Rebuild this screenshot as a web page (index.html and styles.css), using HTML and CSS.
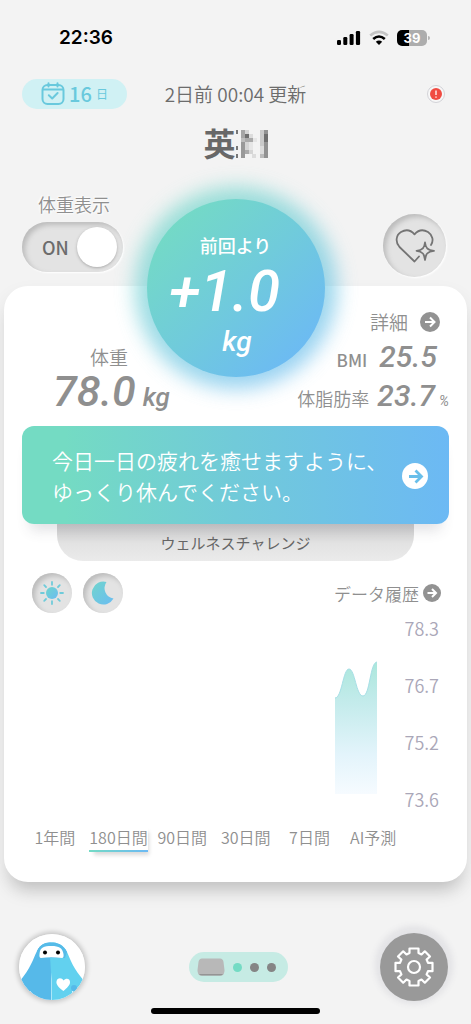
FILE: index.html
```html
<!DOCTYPE html>
<html lang="ja">
<head>
<meta charset="utf-8">
<meta name="viewport" content="width=device-width, initial-scale=1">
<title>体重</title>
<link rel="stylesheet" href="styles.css">
</head>
<body>
<div class="status">
  <time class="clock">22:36</time>
  <div class="status-icons">
    <svg width="24" height="16" viewBox="0 0 24 16"><rect x="0" y="10" width="4" height="5" rx="1.2"/><rect x="6.3" y="7" width="4" height="8" rx="1.2"/><rect x="12.6" y="4" width="4" height="11" rx="1.2"/><rect x="18.9" y="1" width="4.2" height="14" rx="1.2"/></svg>
    <svg width="20" height="16" viewBox="0 0 20 16" fill="none" stroke-width="2.6"><path d="M1.2 5.6Q10-1.8 18.8 5.6" stroke="#c4c4c4"/><path d="M4.2 9Q10 4 15.8 9" stroke="#000"/><path d="M6.8 11.8Q10 9.400 13.200 11.800L10 15Z" fill="#000"/></svg>
    <span class="battery">39</span>
  </div>
</div>

<header class="top">
  <button class="days" type="button">
    <svg width="24" height="24" viewBox="0 0 24 24" fill="none" stroke="#69c9dd" stroke-width="2" stroke-linecap="round" stroke-linejoin="round"><rect x="1.500" y="3" width="21" height="19" rx="5"/><path d="M2 7.500H22M7.500 1.200V4.500M16.500 1.200V4.500M7.800 13.300L11.200 16.500L16.600 11"/></svg>
    <b>16</b><small>日</small>
  </button>
  <p class="updated">2日前 00:04 更新</p>
  <button class="alert" type="button" aria-label="お知らせ"><svg width="12" height="12" viewBox="0 0 12 12"><circle cx="6" cy="6" r="6" fill="#f04b42"/><path d="M6 2.500V7M6 8.500V9.700" stroke="#fff" stroke-width="1.300"/></svg></button>
</header>
<h1 class="name">英<svg width="32" height="32" viewBox="0 0 32 32" shape-rendering="crispEdges" aria-hidden="true">
  <path fill="#777" d="M0 4h2v4H0zM0 20h2v4H0zM0 28h2v4H0z"/>
  <path fill="#a5a5a5" d="M5 4h4v8H5z"/><path fill="#bdbdbd" d="M5 12h4v4H5z"/><path fill="#999" d="M5 16h4v16H5z"/>
  <path fill="#d5d5d5" d="M9 4h4v4H9zM9 16h4v8H9zM13 24h4v4h-4z"/><path fill="#e6e6e6" d="M17 12h4v4h-4zM13 16h4v8h-4z"/><path fill="#6f6f6f" d="M9 8h4v4H9zM28 8h4v8h-4z"/><path fill="#aaa" d="M9 12h8v4H9zM9 24h4v4H9z"/>
  <path fill="#cacaca" d="M24 4h4v16h-4z"/><path fill="#dcdcdc" d="M24 20h4v8h-4zM16 28h4v4h-4zM13 8h4v4h-4z"/><path fill="#bbb" d="M24 28h4v4h-4z"/><path fill="#929292" d="M28 4h4v4h-4zM28 16h4v16h-4z"/>
</svg></h1>

<section class="controls">
  <label class="toggle"><span class="toggle-title">体重表示</span>
    <span class="track"><span>ON</span><input type="checkbox" role="switch" checked></span>
  </label>
  <button class="health" type="button" aria-label="健康">
    <svg width="40" height="34" viewBox="0 0 40 34" fill="none" stroke="#747474" stroke-width="1.800" stroke-linecap="round" stroke-linejoin="round"><path d="M24 27.500L19.500 32.500L4.500 18C0 13 1 6 6 3C11 0 16 1.300 19.500 5.300C23 1.300 28 0 33 3C37.500 6 39 11.500 36 16"/><path d="M30 13.500C30.600 18.500 32.300 21.200 39 21.800C32.300 22.500 30.600 25.200 30 31C29.400 25.200 27.700 22.500 21.500 21.800C27.700 21.200 29.400 18.500 30 13.500Z"/></svg>
  </button>
</section>

<main class="card">
  <div class="bubble"><span class="since">前回より</span><strong>+1.0</strong><em>kg</em></div>

  <section class="stats">
    <div class="weight"><span class="label">体重</span><p><em>78.0</em> <i>kg</i></p></div>
    <div class="details">
      <a class="more" href="#detail">詳細<svg width="20" height="20" viewBox="0 0 20 20"><circle cx="10" cy="10" r="10" fill="#929292"/><path d="M5 10H14M10 5.500L14.500 10L10 14.500" fill="none" stroke="#fff" stroke-width="2"/></svg></a>
      <p class="bmi"><span>BMI</span><em>25.5</em></p>
      <p class="fat"><span>体脂肪率</span><em>23.7</em><i>%</i></p>
    </div>
  </section>

  <a class="banner" href="#message">
    <span>今日一日の疲れを癒せますように、<br>ゆっくり休んでください。</span>
    <svg width="26" height="26" viewBox="0 0 26 26"><circle cx="13" cy="13" r="13" fill="#fff"/><path d="M7 13.500H19M13.500 7.500L19.500 13.500L13.500 19.500" fill="none" stroke="#69bfea" stroke-width="2.800"/></svg>
  </a>
  <a class="challenge" href="#challenge">ウェルネスチャレンジ</a>

  <section class="history">
    <div class="history-head">
      <button class="round" type="button" aria-label="朝"><svg width="24" height="24" viewBox="0 0 24 24"><defs><linearGradient id="tint" x1="0" y1="0" x2="1" y2="1"><stop stop-color="#70d5cc"/><stop offset="1" stop-color="#6bbcf2"/></linearGradient></defs><circle cx="12" cy="12" r="6" fill="url(#tint)"/><path d="M12 1V3.800M12 20.200V23M1 12H3.800M20.200 12H23M4.200 4.200L6 6M18 18L19.800 19.800M4.200 19.800L6 18M18 6L19.800 4.200" stroke="#6fcbda" stroke-width="1.800" stroke-linecap="round"/></svg></button>
      <button class="round" type="button" aria-label="夜"><svg width="24" height="24" viewBox="0 0 24 24"><path d="M15.500 1A11.500 11.500 0 1 0 22.500 17.500A10.500 10.500 0 0 1 15.500 1Z" fill="url(#tint)"/></svg></button>
      <a class="data-link" href="#history">データ履歴<svg width="18" height="18" viewBox="0 0 20 20"><circle cx="10" cy="10" r="10" fill="#929292"/><path d="M5 10H14M10 5.500L14.500 10L10 14.500" fill="none" stroke="#fff" stroke-width="2.200"/></svg></a>
    </div>
    <div class="chart">
      <svg width="42" height="133" viewBox="0 0 42 133" role="img" aria-label="体重の推移"><defs><linearGradient id="area" x1="0" y1="0" x2="0" y2="1"><stop stop-color="#abe7dc"/><stop offset=".3" stop-color="#c3ebeb"/><stop offset=".7" stop-color="#e3f4fb"/><stop offset="1" stop-color="#f6fbff"/></linearGradient></defs><path d="M0 37C7 37 8 8 14 8C20 8 21 35 28 35C35 35 35 1 42 1V133H0Z" fill="url(#area)"/><path d="M0 37C7 37 8 8 14 8C20 8 21 35 28 35C35 35 35 1 42 1" fill="none" stroke="#a6dfe6"/></svg>
      <ol class="axis"><li>78.3</li><li>76.7</li><li>75.2</li><li>73.6</li></ol>
    </div>
    <nav class="ranges">
      <button type="button">1年間</button><button type="button" class="active">180日間</button><button type="button">90日間</button><button type="button">30日間</button><button type="button">7日間</button><button type="button">AI予測</button>
    </nav>
  </section>
</main>

<footer class="dock">
  <button class="avatar" type="button" aria-label="アシスタント">
    <svg width="66" height="66" viewBox="0 0 66 66"><defs><clipPath id="face"><circle cx="33" cy="33" r="33"/></clipPath></defs><g clip-path="url(#face)"><rect width="66" height="66" fill="#fff"/><path d="M0 48C12 34 14 25 18 17C22 9 28 8.500 32 8.500V66H0Z" fill="#56b9e9"/><path d="M32 8.500C38 8.500 44 10 48 18C52 27 54 34 66 48V66H32.500Q33 45 31 22Z" fill="#62d1ef"/><path d="M18 17C22 9 28 8.500 32 8.500C38 8.500 44 10 48 18L46 24H20Z" fill="#56bbe8"/><path d="M22 24Q20 24 20.500 20C21 13 25 12 32.500 12C40 12 43.500 14 44.500 20Q45 24 43 24Q32 22.500 22 24Z" fill="#fff"/><circle cx="26" cy="18.500" r="2"/><circle cx="39" cy="18.500" r="2"/><path d="M44.300 57C39 53 37 50 37.500 47.500C38 43.500 43 43.500 44.500 46.500C47 43.500 51.500 44.500 51 48.500C51 51 48 54 44.300 57Z" fill="#fff"/><circle cx="55" cy="54" r="3" fill="#56b9e9"/><path d="M11 57L13 60M53.500 57V61" stroke="#d9f2fb" stroke-width="1"/></g></svg>
  </button>
  <div class="pager"><svg width="28" height="18" viewBox="0 0 28 18"><path d="M5 .5H23Q26 .5 26.500 4L27.500 12Q27.500 17.500 24 17.500H4Q.5 17.500 .5 12L1.500 4Q2 .5 5 .5Z" fill="#b8b8b8"/><path d="M2 16Q3 17.500 5 17.500H23Q25 17.500 26 16Z" fill="#949494"/></svg><span class="dot current"></span><span class="dot"></span><span class="dot"></span></div>
  <button class="settings" type="button" aria-label="設定">
    <svg width="40" height="40" viewBox="0 0 40 40" fill="none" stroke="#fff" stroke-width="2.200" stroke-linejoin="round"><circle cx="20" cy="20" r="6"/><path d="M15.500 1.500H24.500V6L27.500 7.500L30.800 4.300L36 9.500L32.600 12.600L34 15.800H38.500V24.200H34L32.600 27.400L36 30.500L30.800 35.700L27.500 32.500L24.500 34V38.500H15.500V34L12.500 32.500L9.200 35.700L4 30.500L7.400 27.400L6 24.200H1.500V15.800H6L7.400 12.600L4 9.500L9.200 4.300L12.500 7.500L15.500 6Z"/></svg>
  </button>
</footer>
<div class="home"></div>
</body>
</html>
```
FILE: styles.css
```css
* { box-sizing: border-box; }
body {
  margin: 0;
  min-height: 100vh;
  background: #f3f3f3;
  color: #8f8f8f;
  font-family: "Noto Sans CJK JP", sans-serif;
  overflow-x: hidden;
}
button { font: inherit; color: inherit; border: 0; padding: 0; background: none; }
a { color: inherit; text-decoration: none; }
p, h1, ol { margin: 0; padding: 0; }
svg { display: block; flex: none; }

.status {
  display: flex;
  justify-content: space-between;
  align-items: center;
  padding: 26px 44px 0 59px;
}
.clock { font: 600 19px/24px Inter, sans-serif; color: #000; }
.status-icons { display: flex; align-items: center; gap: 8px; }
.battery {
  position: relative;
  width: 30px;
  border-radius: 5px;
  background: linear-gradient(90deg, #000 40%, #adadad 40%);
  color: #fff;
  font: 700 13px/16px Inter, sans-serif;
  text-align: center;
}
.battery::after {
  content: "";
  position: absolute;
  left: 100%;
  top: 6px;
  width: 2px;
  height: 4px;
  margin-left: 1px;
  border-radius: 0 2px 2px 0;
  background: #b5b5b5;
}

.top {
  display: grid;
  grid-template-columns: 1fr auto 1fr;
  align-items: center;
  padding: 29px 26px 0 22px;
}
.days {
  justify-self: start;
  display: flex;
  align-items: center;
  justify-content: center;
  gap: 4px;
  width: 105px;
  height: 30px;
  border-radius: 15px;
  background: #d0f1f4;
  color: #69c9dd;
  line-height: 30px;
}
.days b { font-size: 20px; font-weight: 500; }
.days small { font-size: 12px; }
.updated { padding-left: 4px; font-size: 19px; line-height: 30px; font-weight: 350; color: #6c6c6c; }
.alert {
  justify-self: end;
  display: grid;
  place-items: center;
  width: 18px;
  height: 18px;
  border: 1px solid #d3d3d8;
  border-radius: 50%;
  background: #f7f7f7;
}
.name {
  display: flex;
  justify-content: center;
  align-items: center;
  margin-top: 11px;
  font-size: 32px;
  line-height: 44px;
  font-weight: 700;
  color: #686868;
}

.controls {
  display: flex;
  justify-content: space-between;
  align-items: flex-start;
  padding: 27px 25px 9px 22px;
}
.toggle { display: grid; gap: 5px; }
.toggle-title {
  padding-left: 3px;
  font-size: 18px;
  line-height: 26px;
  text-align: center;
  font-weight: 350;
  text-shadow: 0 0 2px #fff, 1px 1px 2px #fff, -1px -1px 2px #fff;
}
.track {
  display: flex;
  align-items: center;
  justify-content: space-between;
  width: 101px;
  height: 50px;
  padding: 0 6px 0 20px;
  border-radius: 25px;
  background: #e3e3e3;
  box-shadow: inset 3px 3px 5px #bcbcbc, 1px 1px 2px #fff;
  color: #6c6c6c;
  font-size: 18px;
  font-weight: 500;
}
.track input {
  appearance: none;
  width: 40px;
  height: 40px;
  margin: 0;
  border-radius: 50%;
  background: #fff;
  box-shadow: 0 1px 3px #aaa;
}
.health, .round {
  display: grid;
  place-items: center;
  border-radius: 50%;
  background: #e3e3e3;
  box-shadow: inset 3px 3px 5px #bcbcbc, 1px 1px 2px #fff;
}
.health { width: 63px; height: 63px; margin-top: 23px; }

.card {
  position: relative;
  margin: 0 4px;
  padding: 17px 18px 30px;
  border-radius: 24px;
  background: #fff;
  box-shadow: 0 14px 16px -8px rgba(0, 0, 0, .17), 0 10px 18px 3px rgba(0, 0, 0, .06);
}
.bubble {
  position: absolute;
  top: -87px;
  left: 50%;
  transform: translateX(-50%);
  display: flex;
  flex-direction: column;
  align-items: center;
  width: 178px;
  height: 178px;
  padding-top: 32px;
  border-radius: 50%;
  color: #fff;
  font-family: Roboto, sans-serif;
}
.bubble::before {
  content: "";
  position: absolute;
  z-index: -1;
  inset: -12px;
  border-radius: 50%;
  background: linear-gradient(150deg, #74dbc4, #70cbdb 50%, #6cb9f5);
  opacity: .7;
  filter: blur(10px);
}
.bubble::after {
  content: "";
  position: absolute;
  z-index: -1;
  inset: 0;
  border-radius: 50%;
  background: linear-gradient(135deg, #74dbc4 10%, #70cbdb 50%, #6cb9f5 90%);
}
.since { font: 500 18px/28px "Noto Sans CJK JP", sans-serif; }
.bubble strong { padding-right: 22px; font-size: 58px; line-height: 64px; font-weight: 500; font-style: italic; }
.bubble em { padding-left: 3px; font-size: 28px; line-height: 38px; font-weight: 500; }

.stats { display: flex; justify-content: space-between; align-items: flex-end; }
.weight { padding: 0 0 6px 31px; }
.label { display: block; padding-left: 37px; font-size: 19px; line-height: 28px; font-weight: 350; }
.stats em { font-family: Roboto, sans-serif; font-weight: 500; line-height: 30px; }
.stats i { font-family: Roboto, sans-serif; line-height: 20px; }
.weight p { display: flex; align-items: baseline; gap: 7px; height: 40px; }
.weight em { font-size: 43px; line-height: 40px; }
.weight i { font-size: 26px; font-weight: 500; }
.details { line-height: 38px; font-weight: 350; }
.more { display: flex; align-items: center; justify-content: flex-end; gap: 12px; padding-right: 9px; font-size: 19px; }
.details p { display: flex; align-items: baseline; justify-content: flex-end; height: 38px; }
.details em { font-size: 30px; }
.bmi { gap: 12px; padding-right: 12px; font-size: 17px; font-weight: 500; }
.fat { gap: 8px; font-size: 18px; }
.fat i { font-size: 14px; margin-left: -4px; font-weight: 400; }

.banner {
  display: flex;
  justify-content: space-between;
  align-items: center;
  position: relative;
  margin-top: 9px;
  padding: 19px 21px 17px 30px;
  border-radius: 12px;
  background: linear-gradient(90deg, #74dbc3 10%, #71cad9 50%, #6cb9f4);
  box-shadow: 0 14px 14px -8px rgba(60, 60, 80, .16);
  color: #fff;
  font-size: 21px;
  line-height: 31px;
  font-weight: 350;
  white-space: nowrap;
}
.challenge {
  display: block;
  margin: 0 35px;
  border-radius: 0 0 26px 26px;
  background: linear-gradient(#cfcfcf, #e2e2e2 50%, #ebebeb);
  color: #666;
  font-size: 15px;
  line-height: 37px;
  text-align: center;
}

.history-head { display: flex; align-items: center; gap: 11px; padding: 12px 8px 0 10px; }
.round { width: 40px; height: 40px; }
.data-link { display: flex; align-items: center; gap: 4px; margin-left: auto; font-size: 17px; font-weight: 350; }
.chart { display: flex; justify-content: flex-end; gap: 28px; padding: 3px 10px 0 0; }
.chart svg { margin-top: 45px; }
.axis {
  display: grid;
  gap: 33px;
  list-style: none;
  color: #aaa7b8;
  font-size: 18px;
  line-height: 24px;
  font-weight: 350;
}
.ranges { display: grid; grid-template-columns: repeat(6, 1fr); margin-top: 14px; padding: 0 44px 0 1px; }
.ranges button {
  justify-self: center;
  border-bottom: 2px solid transparent;
  font-size: 16px;
  line-height: 25px;
  font-weight: 350;
  white-space: nowrap;
}
.ranges .active {
  border-image: linear-gradient(90deg, #74dbc4, #6cb9f5) 1;
  box-shadow: 3px 5px 4px -2px rgba(0, 0, 0, .15);
}

.dock {
  display: grid;
  grid-template-columns: 1fr auto 1fr;
  align-items: center;
  padding: 51px 23px 0 19px;
}
.avatar { justify-self: start; border-radius: 50%; box-shadow: 0 0 5px 2px rgba(0, 0, 0, .2); }
.pager {
  display: flex;
  align-items: center;
  gap: 8px;
  width: 99px;
  height: 30px;
  margin-left: 10px;
  padding-left: 8px;
  border-radius: 15px;
  background: #c6ebe4;
}
.dot { width: 9px; height: 9px; border-radius: 50%; background: #858585; }
.dot.current { background: #74dbc4; }
.settings {
  justify-self: end;
  display: grid;
  place-items: center;
  width: 68px;
  height: 68px;
  border-radius: 50%;
  background: #999;
  box-shadow: 0 -2px 6px 5px rgba(90, 90, 120, .1);
}
.home { width: 36%; height: 6px; margin: 7px auto 9px; border-radius: 3px; background: #000; }
```
